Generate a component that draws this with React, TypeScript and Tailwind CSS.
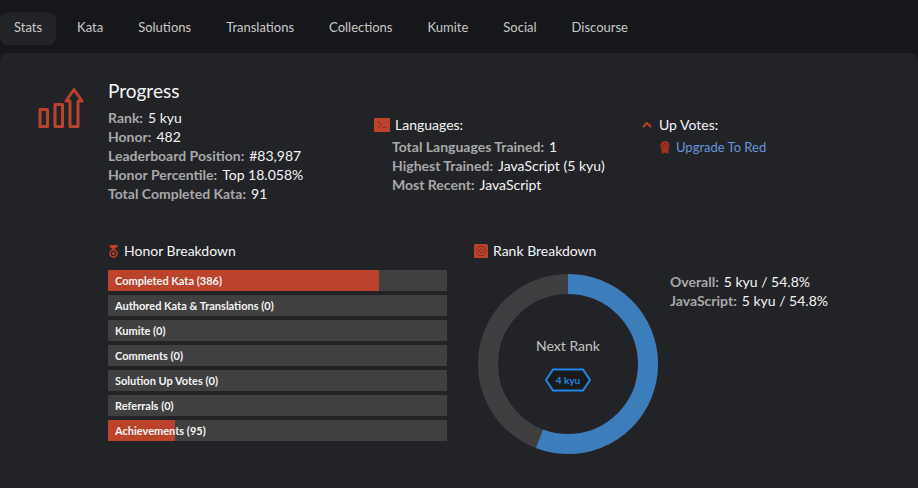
import type { ReactNode } from "react";

const tabs = ["Stats", "Kata", "Solutions", "Translations", "Collections", "Kumite", "Social", "Discourse"];

const progress = [
  { label: "Rank:", value: "5 kyu" },
  { label: "Honor:", value: "482" },
  { label: "Leaderboard Position:", value: "#83,987" },
  { label: "Honor Percentile:", value: "Top 18.058%" },
  { label: "Total Completed Kata:", value: "91" },
];

const languages = [
  { label: "Total Languages Trained:", value: "1" },
  { label: "Highest Trained:", value: "JavaScript (5 kyu)" },
  { label: "Most Recent:", value: "JavaScript" },
];

const ranks = [
  { label: "Overall:", value: "5 kyu / 54.8%" },
  { label: "JavaScript:", value: "5 kyu / 54.8%" },
];

const honor = [
  { label: "Completed Kata", value: 386 },
  { label: "Authored Kata & Translations", value: 0 },
  { label: "Kumite", value: 0 },
  { label: "Comments", value: 0 },
  { label: "Solution Up Votes", value: 0 },
  { label: "Referrals", value: 0 },
  { label: "Achievements", value: 95 },
];

const honorTotal = 482;

function ProgressIcon() {
  return (
    <svg className="block" width="48" height="42" viewBox="0 0 48 42" fill="none" stroke="#bb432c" strokeWidth="3" strokeLinejoin="round" aria-hidden="true">
      <rect x="4" y="22.500" width="7.500" height="17" />
      <rect x="19" y="17.500" width="7.500" height="22" />
      <path d="M34 39.500V14H30L38 2.500 46 14h-4v25.500z" />
    </svg>
  );
}

function TerminalIcon() {
  return (
    <svg width="16" height="14" viewBox="0 0 16 14" fill="none" aria-hidden="true">
      <rect width="16" height="14" rx="0.5" fill="#bb432c" />
      <path d="M4 4l3.500 2.500L4 9.500M8.500 9.500h4" stroke="#8a3021" strokeWidth="1" />
    </svg>
  );
}

function ChevronIcon() {
  return (
    <svg className="mr-0.5" width="10" height="6" viewBox="0 0 10 6" fill="none" stroke="#bb432c" strokeWidth="2" aria-hidden="true">
      <path d="M1 5l4-4 4 4" />
    </svg>
  );
}

function AwardIcon() {
  return (
    <svg width="10" height="13" viewBox="0 0 10 13" aria-hidden="true">
      <path d="M1.500 7h7v6L5 11.500 1.500 13z" fill="#a6301f" />
      <circle cx="5" cy="4.500" r="4.500" fill="#a6301f" />
      <circle cx="5" cy="4.500" r="2" fill="none" stroke="#7c2419" />
    </svg>
  );
}

function MedalIcon() {
  return (
    <svg width="11" height="13" viewBox="0 0 11 13" fill="none" aria-hidden="true">
      <path d="M1.500 0h8v2l-4 2.500-4-2.500z" fill="#bb432c" />
      <circle cx="5.500" cy="8.500" r="3.500" stroke="#bb432c" strokeWidth="1.500" />
      <circle cx="5.500" cy="8.500" r="1.500" fill="#bb432c" />
    </svg>
  );
}

function RankIcon() {
  return (
    <svg width="14" height="14" viewBox="0 0 14 14" fill="none" aria-hidden="true">
      <rect width="14" height="14" rx="1.500" fill="#bb432c" />
      <g stroke="#872f21">
        <path d="M4.500 2.500h5L12 7l-2.500 4.500h-5L2 7z" />
        <circle cx="7" cy="7" r="2" />
      </g>
    </svg>
  );
}

function Facts({ items }: { items: { label: string; value: string }[] }) {
  return (
    <dl>
      {items.map((item) => (
        <div key={item.label} className="flex gap-[5px] leading-[19px] whitespace-nowrap">
          <dt className="font-bold text-[#a8a8a8]">{item.label}</dt>
          <dd>{item.value}</dd>
        </div>
      ))}
    </dl>
  );
}

function Heading({ icon, children }: { icon: ReactNode; children: ReactNode }) {
  return (
    <h3 className="flex items-center gap-[5px] leading-5 whitespace-nowrap">
      {icon}
      {children}
    </h3>
  );
}

function HonorBar({ label, value }: { label: string; value: number }) {
  return (
    <li className="relative h-[21px] bg-[#404040]">
      <div className="h-full bg-[#bb432c]" style={{ width: `${(value / honorTotal) * 100}%` }} />
      <span className="absolute inset-0 px-[7px] text-[11px] leading-[21px] font-bold whitespace-nowrap">
        {label} ({value})
      </span>
    </li>
  );
}

function RankChart() {
  return (
    <div className="relative size-[180px] shrink-0">
      <svg className="block -rotate-90" viewBox="0 0 180 180" fill="none" strokeWidth="20" aria-hidden="true">
        <circle cx="90" cy="90" r="80" stroke="#3f3f42" />
        <circle cx="90" cy="90" r="80" stroke="#3c7ebb" pathLength="100" strokeDasharray="55.800 100" />
      </svg>
      <div className="absolute inset-0 flex flex-col items-center justify-center gap-3">
        <span className="leading-5 text-[#c4c4c4]">Next Rank</span>
        <span className="relative flex h-6 w-[46px] items-center justify-center">
          <svg className="absolute inset-0" width="46" height="24" viewBox="0 0 46 24" aria-hidden="true">
            <path d="M8 1.500h30L45 12l-7 10.500H8L1 12z" fill="#191a1c" stroke="#1f87e7" strokeWidth="2" />
          </svg>
          <span className="relative text-[10px] leading-4 font-bold text-[#1f87e7]">4 kyu</span>
        </span>
      </div>
    </div>
  );
}

export default function App() {
  return (
    <div className="min-h-screen bg-[#16171b] font-[Lato,sans-serif] text-sm text-[#f5f5f5]">
      <nav className="flex gap-[7px] pt-3 pb-2">
        {tabs.map((tab) => (
          <a
            key={tab}
            href="#"
            aria-current={tab === "Stats" ? "page" : undefined}
            className="rounded-lg px-[14px] pt-[5px] pb-2 text-[13px] leading-5 text-[#c9c9c9] aria-[current=page]:bg-[#222327]"
          >
            {tab}
          </a>
        ))}
      </nav>
      <main className="flex gap-6 rounded-lg bg-[#222327] px-9 pt-7 pb-11">
        <div className="w-12 shrink-0 pt-1.5">
          <ProgressIcon />
        </div>
        <div className="min-w-0 flex-1">
          <section className="flex">
            <div className="w-[266px] shrink-0">
              <h2 className="mb-[7px] text-[19px] leading-5">Progress</h2>
              <Facts items={progress} />
            </div>
            <div className="w-[268px] shrink-0 pt-[34px]">
              <Heading icon={<TerminalIcon />}>Languages:</Heading>
              <div className="pt-0.5 pl-[18px]">
                <Facts items={languages} />
              </div>
            </div>
            <div className="pt-[34px]">
              <Heading icon={<ChevronIcon />}>Up Votes:</Heading>
              <a href="#" className="flex items-center gap-1.5 pt-0.5 pl-[18px] text-[13px] leading-5 whitespace-nowrap text-[#6795de]">
                <AwardIcon />
                Upgrade To Red
              </a>
            </div>
          </section>
          <section className="flex gap-[27px] pt-[38px]">
            <div className="max-w-[339px] flex-1">
              <Heading icon={<MedalIcon />}>Honor Breakdown</Heading>
              <ul className="flex flex-col gap-1 pt-[9px]">
                {honor.map((item) => (
                  <HonorBar key={item.label} label={item.label} value={item.value} />
                ))}
              </ul>
            </div>
            <div>
              <Heading icon={<RankIcon />}>Rank Breakdown</Heading>
              <div className="flex gap-3 pt-[11px] pl-1">
                <div className="pt-0.5">
                  <RankChart />
                </div>
                <Facts items={ranks} />
              </div>
            </div>
          </section>
        </div>
      </main>
    </div>
  );
}
